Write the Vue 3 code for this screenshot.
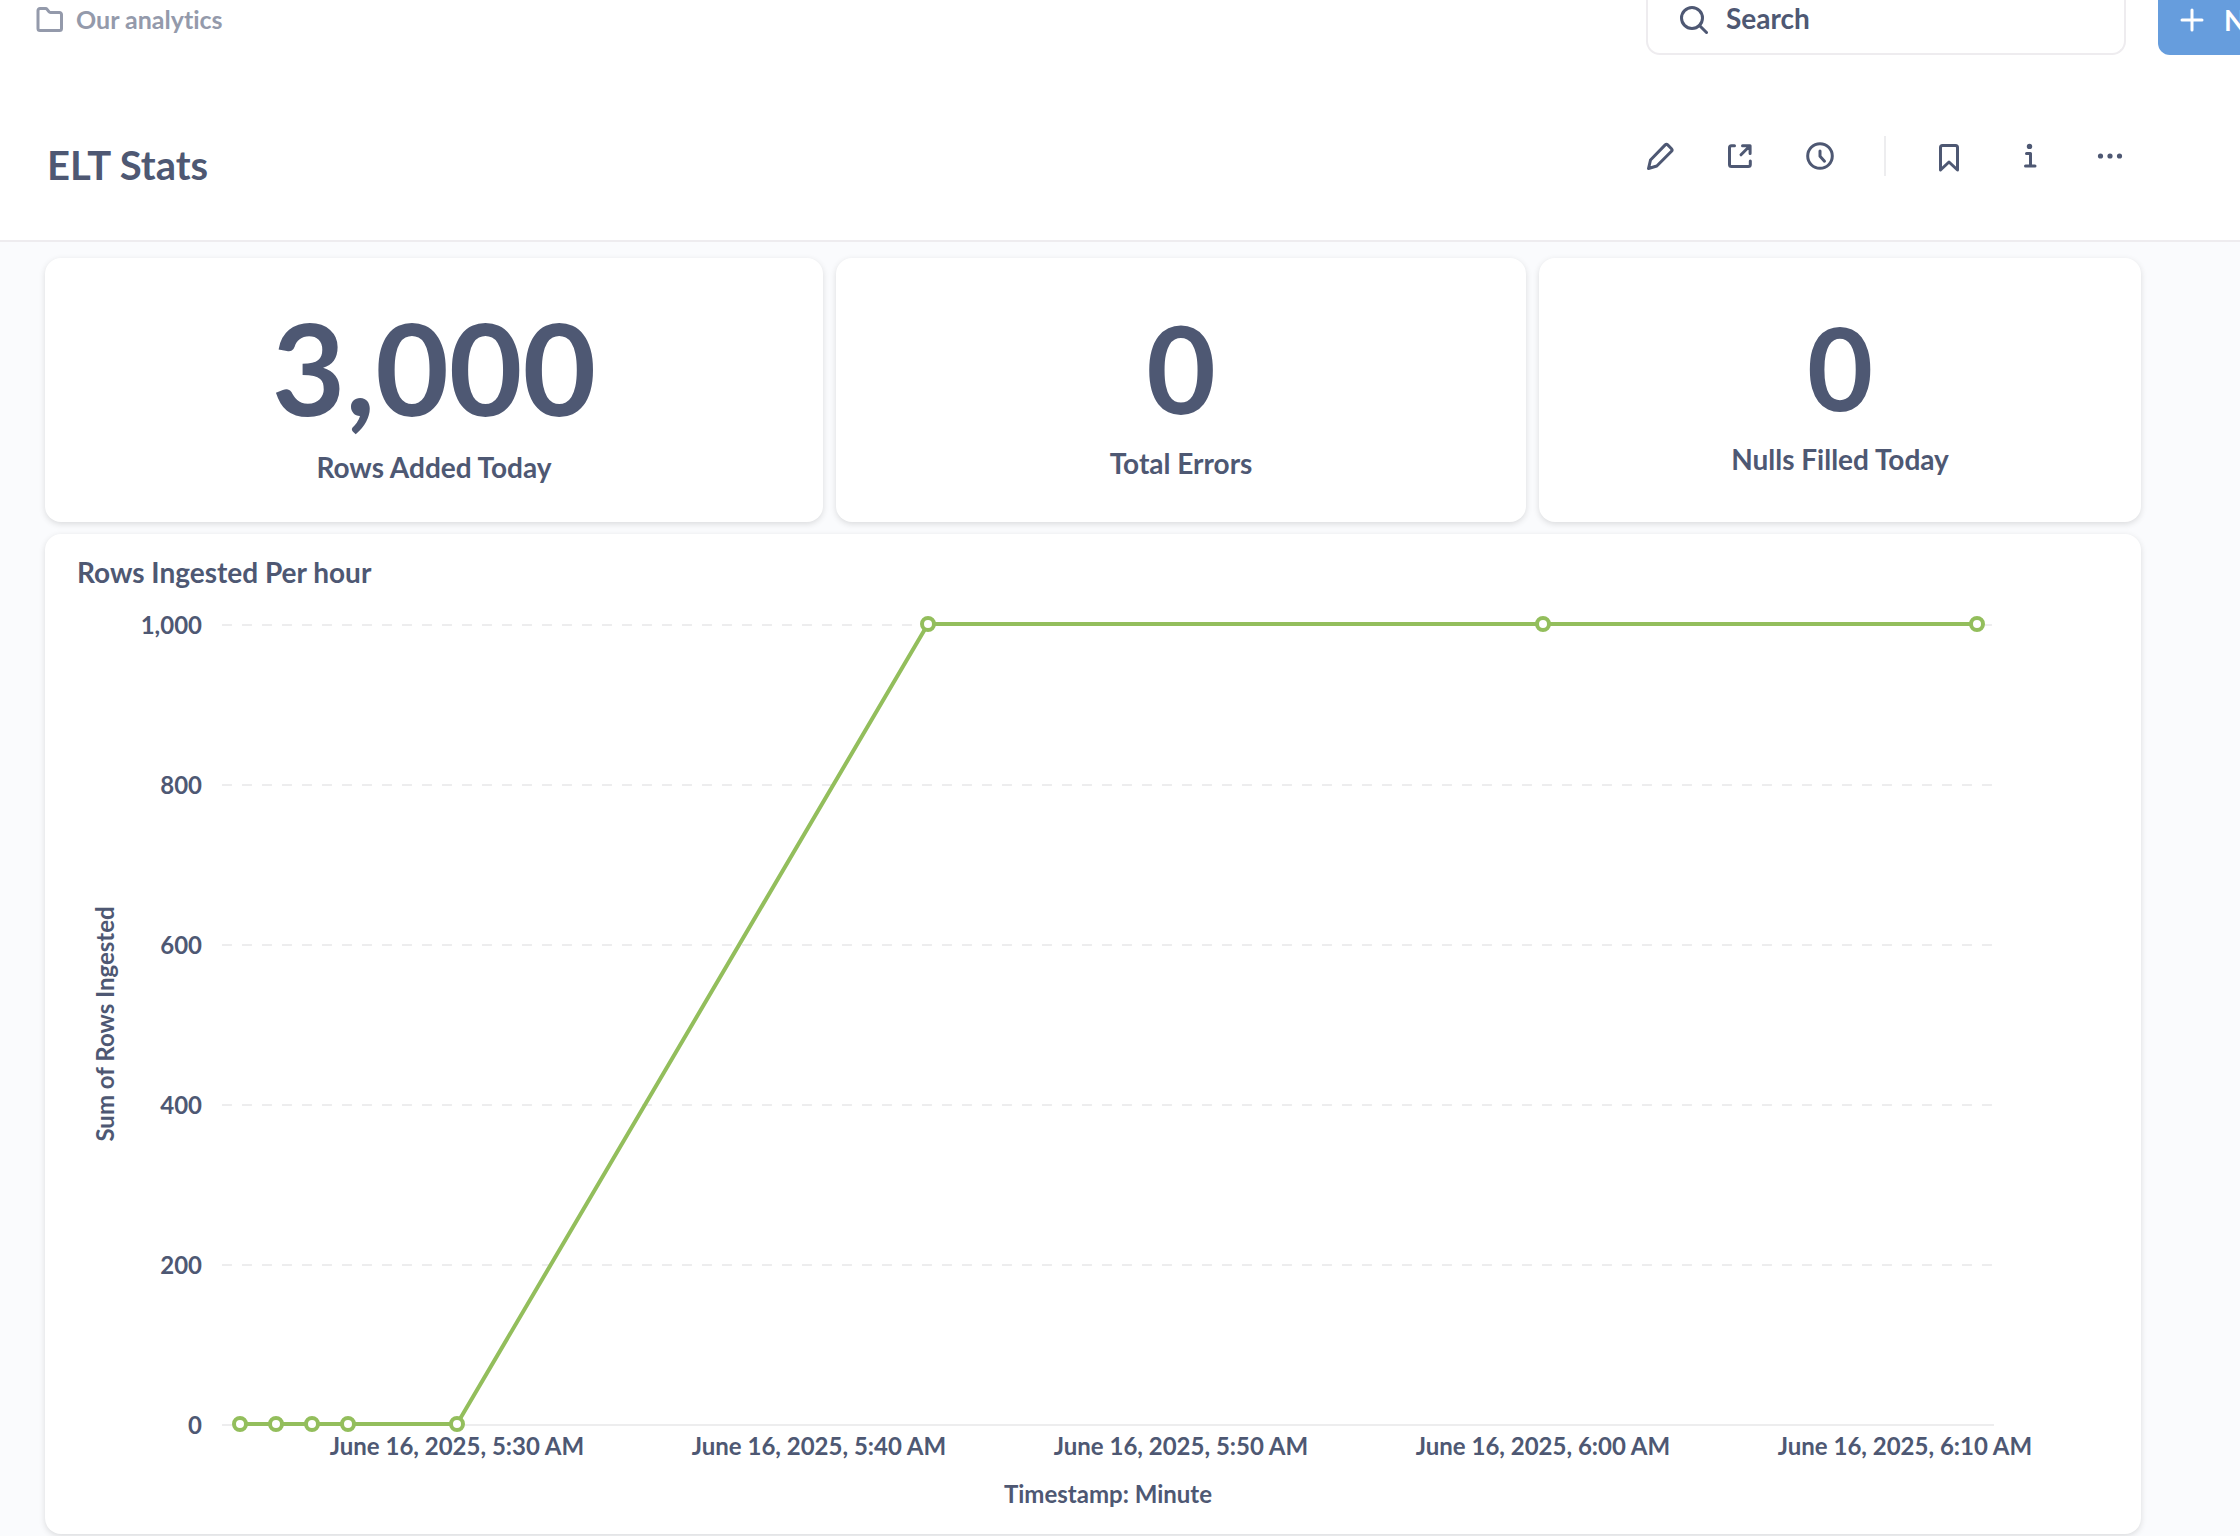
<script setup>
const stats = [
  { value: '3,000', label: 'Rows Added Today', size: 127 },
  { value: '0', label: 'Total Errors', size: 120 },
  { value: '0', label: 'Nulls Filled Today', size: 114 },
]

// Plot geometry, in the chart's own drawing units
const baseY = 834
const topY = 34
const startX = 412
const tickStep = 362

const yOf = (rows) => baseY - ((baseY - topY) * rows) / 1000
const xOf = (minutes) => Math.round(startX + (tickStep * minutes) / 10)

const yTicks = [1000, 800, 600, 400, 200, 0]
const xTicks = [
  { minutes: 0, label: 'June 16, 2025, 5:30 AM' },
  { minutes: 10, label: 'June 16, 2025, 5:40 AM' },
  { minutes: 20, label: 'June 16, 2025, 5:50 AM' },
  { minutes: 30, label: 'June 16, 2025, 6:00 AM' },
  { minutes: 40, label: 'June 16, 2025, 6:10 AM' },
]

// Minutes are counted from 5:30 AM
const series = [
  [-6, 0],
  [-5, 0],
  [-4, 0],
  [-3, 0],
  [0, 0],
  [13, 1000],
  [30, 1000],
  [42, 1000],
].map(([minutes, rows]) => ({ x: xOf(minutes), y: yOf(rows) }))

const linePoints = series.map((p) => `${p.x},${p.y}`).join(' ')
</script>

<template>
  <div class="page">
    <header class="header">
      <div class="appbar">
        <a class="crumb" href="#">
          <svg width="28" height="28" viewBox="0 0 28 28" fill="none" stroke="currentColor" stroke-width="3" stroke-linejoin="round" aria-hidden="true">
            <path d="M4 3.5h5.500a2 2 0 0 1 1.600.8l1.800 2.400a2 2 0 0 0 1.600.8h9a2 2 0 0 1 2 2v14a2 2 0 0 1-2 2h-19.500a2 2 0 0 1-2-2v-18a2 2 0 0 1 2-2z" />
          </svg>
          <span>Our analytics</span>
        </a>
        <label class="search">
          <svg width="28" height="32" viewBox="0 0 28 32" fill="none" stroke="currentColor" stroke-width="3" stroke-linecap="round" aria-hidden="true">
            <circle cx="12" cy="14" r="10.500" />
            <path d="M19.500 21.500l7 7" />
          </svg>
          <input type="search" placeholder="Search" aria-label="Search" />
        </label>
        <button class="new" type="button">
          <svg width="24" height="24" viewBox="0 0 24 24" fill="none" stroke="currentColor" stroke-width="3" stroke-linecap="round" aria-hidden="true">
            <path d="M12 2v20M2 12h20" />
          </svg>
          <span>New</span>
        </button>
      </div>

      <div class="titlebar">
        <h1>ELT Stats</h1>
        <div class="actions">
          <button type="button" aria-label="Edit dashboard">
            <svg viewBox="0 0 32 32">
              <path d="M4.500 28.500l2-8.500L21.200 4.900a1.800 1.800 0 0 1 2.500 0l3.800 3.800a1.800 1.800 0 0 1 0 2.500L12.800 26z" />
            </svg>
          </button>
          <button type="button" aria-label="Share">
            <svg viewBox="0 0 32 32">
              <path d="M10.500 5.700H7.500a2 2 0 0 0-2 2v16.800a2 2 0 0 0 2 2h16.800a2 2 0 0 0 2-2v-3.500" />
              <path d="M18.500 5.700h7.600v7.800M25.500 6.300l-8.500 8.500" />
            </svg>
          </button>
          <button type="button" aria-label="Auto-refresh">
            <svg viewBox="0 0 32 32">
              <circle cx="16" cy="16" r="12.300" />
              <path d="M16 11v5.200l4.500 5" />
            </svg>
          </button>
          <span class="divider"></span>
          <button type="button" aria-label="Bookmark">
            <svg viewBox="0 0 32 32">
              <path d="M6.500 30V7.500a2 2 0 0 1 2-2h13a2 2 0 0 1 2 2V30L15 22z" />
            </svg>
          </button>
          <button type="button" aria-label="Dashboard info">
            <svg viewBox="0 0 32 32">
              <circle class="solid" cx="15.500" cy="6.400" r="2.700" />
              <path d="M12.500 13.500h4V26M11.500 26h9.500" />
            </svg>
          </button>
          <button type="button" aria-label="More options">
            <svg viewBox="0 0 32 32">
              <circle class="solid" cx="6.500" cy="16" r="2.600" />
              <circle class="solid" cx="16" cy="16" r="2.600" />
              <circle class="solid" cx="25.500" cy="16" r="2.600" />
            </svg>
          </button>
        </div>
      </div>
    </header>

    <main class="board">
      <section v-for="stat in stats" :key="stat.label" class="card stat">
        <div class="value" :style="{ fontSize: stat.size + 'px' }">{{ stat.value }}</div>
        <h2>{{ stat.label }}</h2>
      </section>

      <section class="card chart">
        <h2>Rows Ingested Per hour</h2>
        <svg class="plot" viewBox="0 0 2096 944" role="img" aria-label="Rows Ingested Per hour">
          <g v-for="tick in yTicks" :key="tick">
            <line :class="tick ? 'grid' : 'axis'" x1="177" x2="1949" :y1="yOf(tick) + 1" :y2="yOf(tick) + 1" />
            <text x="157" :y="yOf(tick) + 10" text-anchor="end">{{ tick.toLocaleString('en-US') }}</text>
          </g>
          <text v-for="tick in xTicks" :key="tick.label" :x="xOf(tick.minutes)" y="865" text-anchor="middle">{{ tick.label }}</text>
          <text x="1063" y="913" text-anchor="middle">Timestamp: Minute</text>
          <text transform="translate(69 434) rotate(-90)" text-anchor="middle">Sum of Rows Ingested</text>
          <polyline :points="linePoints" />
          <circle v-for="p in series" :key="p.x" :cx="p.x" :cy="p.y" r="6" />
        </svg>
      </section>
    </main>
  </div>
</template>

<style>
body {
  background: #fafbfd;
}
</style>

<style scoped>
.page {
  overflow: hidden;
  color: #4e5873;
  font-family: Lato, sans-serif;
  font-weight: 700;
  font-variant-ligatures: none;
}

h1,
h2 {
  margin: 0;
  font-weight: 700;
}

h2 {
  font-size: 28px;
  line-height: 34px;
}

button {
  padding: 0;
  border: 0;
  background: none;
  color: inherit;
  font: inherit;
}

.header {
  border-bottom: 2px solid #eeecef;
  background: #fff;
}

.appbar {
  display: flex;
  height: 55px;
  margin-right: -62px;
}

.crumb {
  display: flex;
  align-items: center;
  gap: 12px;
  height: 38px;
  margin: 0 auto 0 36px;
  color: #949aab;
  font-size: 25px;
  text-decoration: none;
}

.search {
  box-sizing: border-box;
  display: flex;
  gap: 18px;
  width: 480px;
  padding: 4px 32px 0;
  border: 2px solid #eeecef;
  border-top: 0;
  border-radius: 0 0 14px 14px;
}

.search input {
  flex: 1;
  min-width: 0;
  height: 28px;
  padding: 0;
  border: 0;
  outline: 0;
  background: none;
  color: inherit;
  font: inherit;
  font-size: 28px;
}

.search input::placeholder {
  color: #4e5873;
  opacity: 1;
}

.new {
  display: flex;
  flex: none;
  gap: 20px;
  width: 144px;
  margin-left: 32px;
  padding: 8px 0 0 22px;
  border-radius: 0 0 12px 12px;
  background: #669ddd;
  color: #fff;
  font-size: 28px;
  line-height: 24px;
}

.new svg {
  flex: none;
}

.titlebar {
  display: flex;
  justify-content: space-between;
  padding: 81px 114px 46px 47px;
}

h1 {
  font-size: 40px;
  line-height: 58px;
}

.actions {
  display: flex;
  align-items: center;
  gap: 48px;
  height: 40px;
}

.actions button {
  width: 32px;
  height: 32px;
}

.actions svg {
  display: block;
  fill: none;
  stroke: currentColor;
  stroke-width: 3;
  stroke-linecap: round;
  stroke-linejoin: round;
}

.actions .solid {
  fill: currentColor;
  stroke: none;
}

.divider {
  width: 2px;
  height: 40px;
  background: #ededef;
}

.board {
  display: grid;
  grid-template-columns: 778fr 690fr 602fr;
  gap: 12px 13px;
  padding: 16px 99px 2px 45px;
}

.card {
  border-radius: 16px;
  background: #fff;
  box-shadow: 0 2px 6px rgba(0, 0, 0, 0.13);
}

.stat {
  box-sizing: border-box;
  display: flex;
  flex-direction: column;
  align-items: center;
  justify-content: center;
  min-height: 264px;
  padding-bottom: 11px;
}

.value {
  line-height: 1.3;
}

.chart {
  grid-column: 1 / -1;
  padding-top: 21px;
}

.chart h2 {
  padding: 0 32px 1px;
}

.plot {
  display: block;
  width: 100%;
  height: auto;
}

.plot text {
  fill: #4e5873;
  font-size: 24px;
}

.grid,
.axis {
  stroke: #ededee;
  stroke-width: 2;
}

.grid {
  stroke-dasharray: 10 10;
}

.plot polyline {
  fill: none;
  stroke: #93be5c;
  stroke-width: 4;
  stroke-linejoin: round;
}

.plot circle {
  fill: #fff;
  stroke: #93be5c;
  stroke-width: 4;
}
</style>
